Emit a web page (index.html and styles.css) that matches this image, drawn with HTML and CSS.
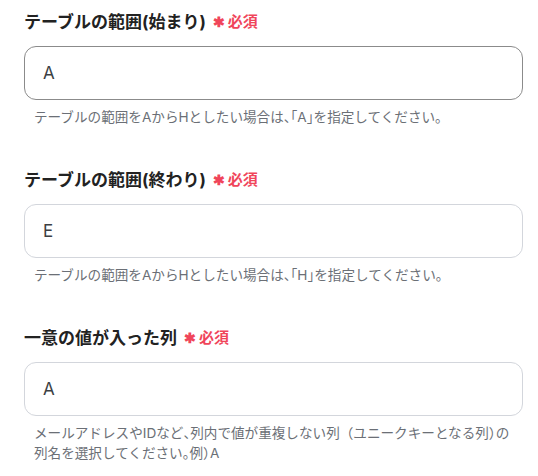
FILE: index.html
```html
<!DOCTYPE html>
<html lang="ja">
<head>
<meta charset="utf-8">
<link rel="stylesheet" href="styles.css">
</head>
<body>
<div class="form">
  <div class="field">
    <div class="label">テーブルの範囲(始まり)<span class="req"><span class="ast">✱</span>必須</span></div>
    <div class="input focused">A</div>
    <div class="help">テーブルの範囲をAからHとしたい場合は<span class="p">、「</span>A<span class="p">」</span>を指定してください<span class="p">。</span></div>
  </div>
  <div class="field">
    <div class="label">テーブルの範囲(終わり)<span class="req"><span class="ast">✱</span>必須</span></div>
    <div class="input">E</div>
    <div class="help">テーブルの範囲をAからHとしたい場合は<span class="p">、「</span>H<span class="p">」</span>を指定してください<span class="p">。</span></div>
  </div>
  <div class="field">
    <div class="label">一意の値が入った列<span class="req"><span class="ast">✱</span>必須</span></div>
    <div class="input">A</div>
    <div class="help">メールアドレスやIDなど<span class="p">、</span>列内で値が重複しない列（ユニークキーとなる列<span class="p">）</span>の<br>列名を選択してください<span class="p">。</span>例<span class="p">）</span>A</div>
  </div>
</div>
</body>
</html>
```
FILE: styles.css
```css
* { box-sizing: border-box; }
html, body { margin: 0; padding: 0; background: #fff; }
body { font-family: Inter, "Noto Sans CJK JP", "Noto Sans", sans-serif; color: #1f2023; }
.form { padding: 10px 15px 0 24px; display: flex; flex-direction: column; gap: 41px; }
.field { display: flex; flex-direction: column; }
.label { font-size: 17px; font-weight: 700; line-height: 24px; color: #222; display: flex; align-items: center; }
.req { color: #f0455a; font-size: 15px; font-weight: 700; margin-left: 7px; display: inline-flex; align-items: center; }
.ast { font-size: 14px; margin-right: 3px; }
.input { margin-top: 12px; height: 54px; border: 1px solid #d3d6dc; border-radius: 12px; padding: 0 18px; font-size: 17px; line-height: 52px; color: #3c3f44; }
.input.focused { border-color: #8b8b8b; }
.help { margin-top: 7px; padding-left: 10px; font-size: 13.6px; line-height: 20px; color: #6b6f76; }
.p { font-feature-settings: "halt"; }
```
